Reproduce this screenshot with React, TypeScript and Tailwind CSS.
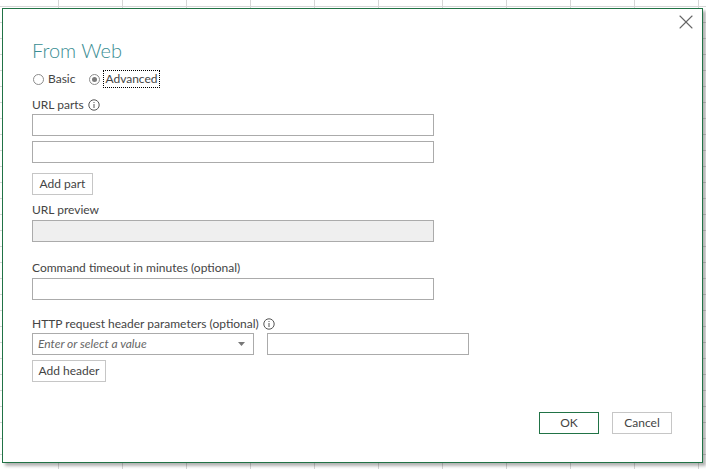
import { X } from "lucide-react";

const FONT = "font-['Segoe_UI','Lato','Liberation_Sans',sans-serif]";

function InfoIcon() {
  return (
    <svg width="12" height="12" viewBox="0 0 12 12" className="inline-block">
      <circle cx="6" cy="6" r="5.2" fill="none" stroke="#555" strokeWidth="1" />
      <rect x="5.5" y="5" width="1" height="4" fill="#555" />
      <rect x="5.5" y="3" width="1" height="1" fill="#555" />
    </svg>
  );
}

function Radio({ checked }: { checked?: boolean }) {
  return (
    <span className="flex h-[11px] w-[11px] items-center justify-center rounded-full border border-[#8c8c8c] bg-white">
      {checked && <span className="h-[5px] w-[5px] rounded-full bg-[#7a7a7a]" />}
    </span>
  );
}

function TextBox({ width = "w-[402px]", disabled }: { width?: string; disabled?: boolean }) {
  return (
    <div
      className={`h-[22px] ${width} border border-[#ababab] ${disabled ? "bg-[#efefef]" : "bg-white"}`}
    />
  );
}

function Label({ children }: { children: React.ReactNode }) {
  return (
    <div className="flex h-[16px] items-center gap-[4px] text-[12px] leading-[16px] text-[#444]">
      {children}
    </div>
  );
}

function Button({ children, width, primary }: { children: React.ReactNode; width: string; primary?: boolean }) {
  return (
    <button
      className={`flex h-[22px] ${width} items-center justify-center border bg-white text-[12px] text-[#444] ${
        primary ? "border-[#217346]" : "border-[#c6c6c6]"
      }`}
    >
      {children}
    </button>
  );
}

export default function App() {
  return (
    <div
      className={`${FONT} h-[469px] w-[706px] overflow-hidden bg-white bg-[linear-gradient(to_right,#d6d6d6_1px,transparent_1px),linear-gradient(to_bottom,#d6d6d6_1px,transparent_1px)] bg-[size:64px_16px] bg-[position:58px_6px] pl-[2px] pt-[8px]`}
    >
      <div className="relative flex h-[455px] w-[701px] flex-col border border-[#217346] bg-white pl-[29px] pr-[30px] shadow-[3px_3px_3px_rgba(0,0,0,0.3)]">
        <button className="absolute right-[4px] top-[1px] text-[#666]">
          <X size={24} strokeWidth={1.1} />
        </button>

        <h1 className="mt-[28px] h-[27px] text-[20px] font-light leading-[27px] text-[#3a8d93]">From Web</h1>

        <div className="mt-[6px] flex h-[18px] items-center text-[12px] text-[#444]">
          <label className="flex items-center gap-[4px] pl-[1px]">
            <Radio />
            <span>Basic</span>
          </label>
          <label className="ml-[14px] flex items-center gap-[3px]">
            <Radio checked />
            <span className="flex h-[18px] items-center border border-dotted border-black px-[1px]">Advanced</span>
          </label>
        </div>

        <div className="mt-[9px]">
          <Label>
            URL parts <InfoIcon />
          </Label>
        </div>
        <div className="mt-[1px]">
          <TextBox />
        </div>
        <div className="mt-[5px]">
          <TextBox />
        </div>
        <div className="mt-[10px]">
          <Button width="w-[61px]">Add part</Button>
        </div>

        <div className="mt-[7px]">
          <Label>URL preview</Label>
        </div>
        <div className="mt-[2px]">
          <TextBox disabled />
        </div>

        <div className="mt-[18px]">
          <Label>Command timeout in minutes (optional)</Label>
        </div>
        <div className="mt-[2px]">
          <TextBox />
        </div>

        <div className="mt-[16px]">
          <Label>
            HTTP request header parameters (optional) <InfoIcon />
          </Label>
        </div>
        <div className="mt-[1px] flex gap-[13px]">
          <div className="flex h-[22px] w-[222px] items-center justify-between border border-[#ababab] bg-white pl-[5px] pr-[8px]">
            <span className="text-[12px] italic text-[#666]">Enter or select a value</span>
            <svg width="7" height="4" viewBox="0 0 7 4">
              <path d="M0 0h7L3.5 4z" fill="#777" />
            </svg>
          </div>
          <TextBox width="w-[202px]" />
        </div>
        <div className="mt-[5px]">
          <Button width="w-[74px]">Add header</Button>
        </div>

        <div className="mt-[30px] flex justify-end gap-[13px]">
          <Button width="w-[60px]" primary>
            OK
          </Button>
          <Button width="w-[60px]">Cancel</Button>
        </div>
      </div>
    </div>
  );
}
